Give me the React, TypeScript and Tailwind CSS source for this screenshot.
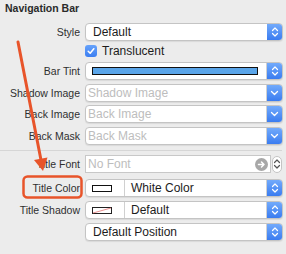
import React from "react";

const font = { fontFamily: '"Liberation Sans", Arial, sans-serif' };

function UpDown({ color = "white" }: { color?: string }) {
  return (
    <svg width="8" height="12" viewBox="0 0 8 12">
      <path
        d="M1.5 4.5 L4 2 L6.5 4.5 M1.5 7.5 L4 10 L6.5 7.5"
        stroke={color}
        strokeWidth="1.2"
        fill="none"
        strokeLinecap="round"
        strokeLinejoin="round"
      />
    </svg>
  );
}

function Down() {
  return (
    <svg width="9" height="8" viewBox="0 0 9 8">
      <path d="M1.5 2.5 L4.5 5.5 L7.5 2.5" stroke="white" strokeWidth="1.3" fill="none" strokeLinecap="round" strokeLinejoin="round" />
    </svg>
  );
}

function BlueBtn({ single }: { single?: boolean }) {
  return (
    <div className="w-[15px] h-full bg-gradient-to-b from-[#72aafb] to-[#3a7cf0] flex items-center justify-center shrink-0">
      {single ? <Down /> : <UpDown />}
    </div>
  );
}

function Field({ children, className = "" }: { children: React.ReactNode; className?: string }) {
  return (
    <div
      className={`flex h-[18px] w-[198px] rounded-[4px] bg-white border border-[#c4c4c4] shadow-[0_1px_1px_rgba(0,0,0,0.08)] overflow-hidden ${className}`}
    >
      {children}
    </div>
  );
}

function Row({ label, children, className = "" }: { label?: string; children: React.ReactNode; className?: string }) {
  return (
    <div className={`flex items-center h-[18px] ${className}`}>
      <div className="w-[80px] text-right text-[10.5px] text-[#2f2f2f] leading-[18px] whitespace-nowrap">{label}</div>
      <div className="ml-[5px]">{children}</div>
    </div>
  );
}

function Combo({ placeholder }: { placeholder: string }) {
  return (
    <Field>
      <div className="flex-1 pl-[2px] text-[12px] leading-[16px] text-[#bdbdbd] border-r border-[#d0d0d0]">{placeholder}</div>
      <BlueBtn single />
    </Field>
  );
}

export default function App() {
  return (
    <div className="w-[286px] h-[254px] bg-[#ececec] relative overflow-hidden" style={font}>
      <div className="h-[23px] pl-[5px] pt-[2px] text-[10.5px] font-bold leading-[13px] text-[#2a2a2a]">Navigation Bar</div>

      <Row label="Style">
        <Field>
          <div className="flex-1 pl-[7px] text-[12px] leading-[16px] text-[#1c1c1c]">Default</div>
          <BlueBtn />
        </Field>
      </Row>

      <div className="flex items-center h-[14px] mt-[3px]">
        <div className="w-[85px]" />
        <div className="w-[12px] h-[12px] rounded-[3px] bg-gradient-to-b from-[#66a2fb] to-[#3b7ef1] flex items-center justify-center">
          <svg width="10" height="10" viewBox="0 0 10 10">
            <path d="M2.2 5.2 L4.2 7.3 L7.8 2.7" stroke="white" strokeWidth="1.5" fill="none" strokeLinecap="round" strokeLinejoin="round" />
          </svg>
        </div>
        <div className="ml-[5px] text-[12px] text-[#1c1c1c] leading-[14px]">Translucent</div>
      </div>

      <Row label="Bar Tint" className="mt-[4px]">
        <Field>
          <div className="flex-1 flex items-center pl-[6px] pr-[8px] border-r border-[#d0d0d0]">
            <div className="h-[8px] w-full bg-[#5aa5e9] border-[1.5px] border-[#111]" />
          </div>
          <BlueBtn />
        </Field>
      </Row>

      <Row label="Shadow Image" className="mt-[4px]">
        <Combo placeholder="Shadow Image" />
      </Row>
      <Row label="Back Image" className="mt-[3px]">
        <Combo placeholder="Back Image" />
      </Row>
      <Row label="Back Mask" className="mt-[4px]">
        <Combo placeholder="Back Mask" />
      </Row>

      <div className="mt-[5px] h-px w-[282px] bg-[#d6d6d6]" />

      <Row label="Title Font" className="mt-[4px]">
        <div className="flex items-center">
          <div className="flex items-center h-[18px] w-[186px] bg-white border border-[#c8c8c8]">
            <div className="flex-1 pl-[2px] text-[12px] leading-[16px] text-[#bdbdbd]">No Font</div>
            <div className="w-[13px] h-[13px] rounded-full bg-[#a8a8a8] flex items-center justify-center mr-[2px]">
              <svg width="9" height="9" viewBox="0 0 9 9">
                <path d="M1.5 4.5 H7 M4.5 2 L7 4.5 L4.5 7" stroke="white" strokeWidth="1.5" fill="none" strokeLinecap="round" strokeLinejoin="round" />
              </svg>
            </div>
          </div>
          <div className="ml-[1px] w-[10px] h-[17px] rounded-full bg-white border border-[#c4c4c4] flex items-center justify-center">
            <UpDown color="#555" />
          </div>
        </div>
      </Row>

      <Row label="Title Color" className="mt-[6px]">
        <Field>
          <div className="w-[39px] flex items-center pl-[6px] border-r border-[#d0d0d0]">
            <div className="w-[20px] h-[7px] bg-white border border-[#111]" />
          </div>
          <div className="flex-1 pl-[6px] text-[12px] leading-[16px] text-[#1c1c1c] border-r border-[#d0d0d0]">White Color</div>
          <BlueBtn />
        </Field>
      </Row>

      <Row label="Title Shadow" className="mt-[4px]">
        <Field>
          <div className="w-[39px] flex items-center pl-[6px] border-r border-[#d0d0d0]">
            <svg width="20" height="7" viewBox="0 0 20 7">
              <rect x="0.5" y="0.5" width="19" height="6" fill="white" stroke="#222" />
              <line x1="1" y1="6" x2="19" y2="1" stroke="#e06060" strokeWidth="0.7" />
            </svg>
          </div>
          <div className="flex-1 pl-[6px] text-[12px] leading-[16px] text-[#1c1c1c] border-r border-[#d0d0d0]">Default</div>
          <BlueBtn />
        </Field>
      </Row>

      <Row className="mt-[4px]">
        <Field>
          <div className="flex-1 pl-[7px] text-[12px] leading-[16px] text-[#1c1c1c] border-r border-[#d0d0d0]">Default Position</div>
          <BlueBtn />
        </Field>
      </Row>

      <svg className="absolute inset-0 pointer-events-none" width="286" height="254" viewBox="0 0 286 254">
        <line x1="18" y1="42" x2="40.8" y2="159" stroke="#e8542a" strokeWidth="3" strokeLinecap="round" />
        <polygon points="43,171 47.5,157.5 34,160" fill="#e8542a" />
        <rect x="23.5" y="176.5" width="58" height="21" rx="4" fill="none" stroke="#e8542a" strokeWidth="2.5" />
      </svg>
    </div>
  );
}
